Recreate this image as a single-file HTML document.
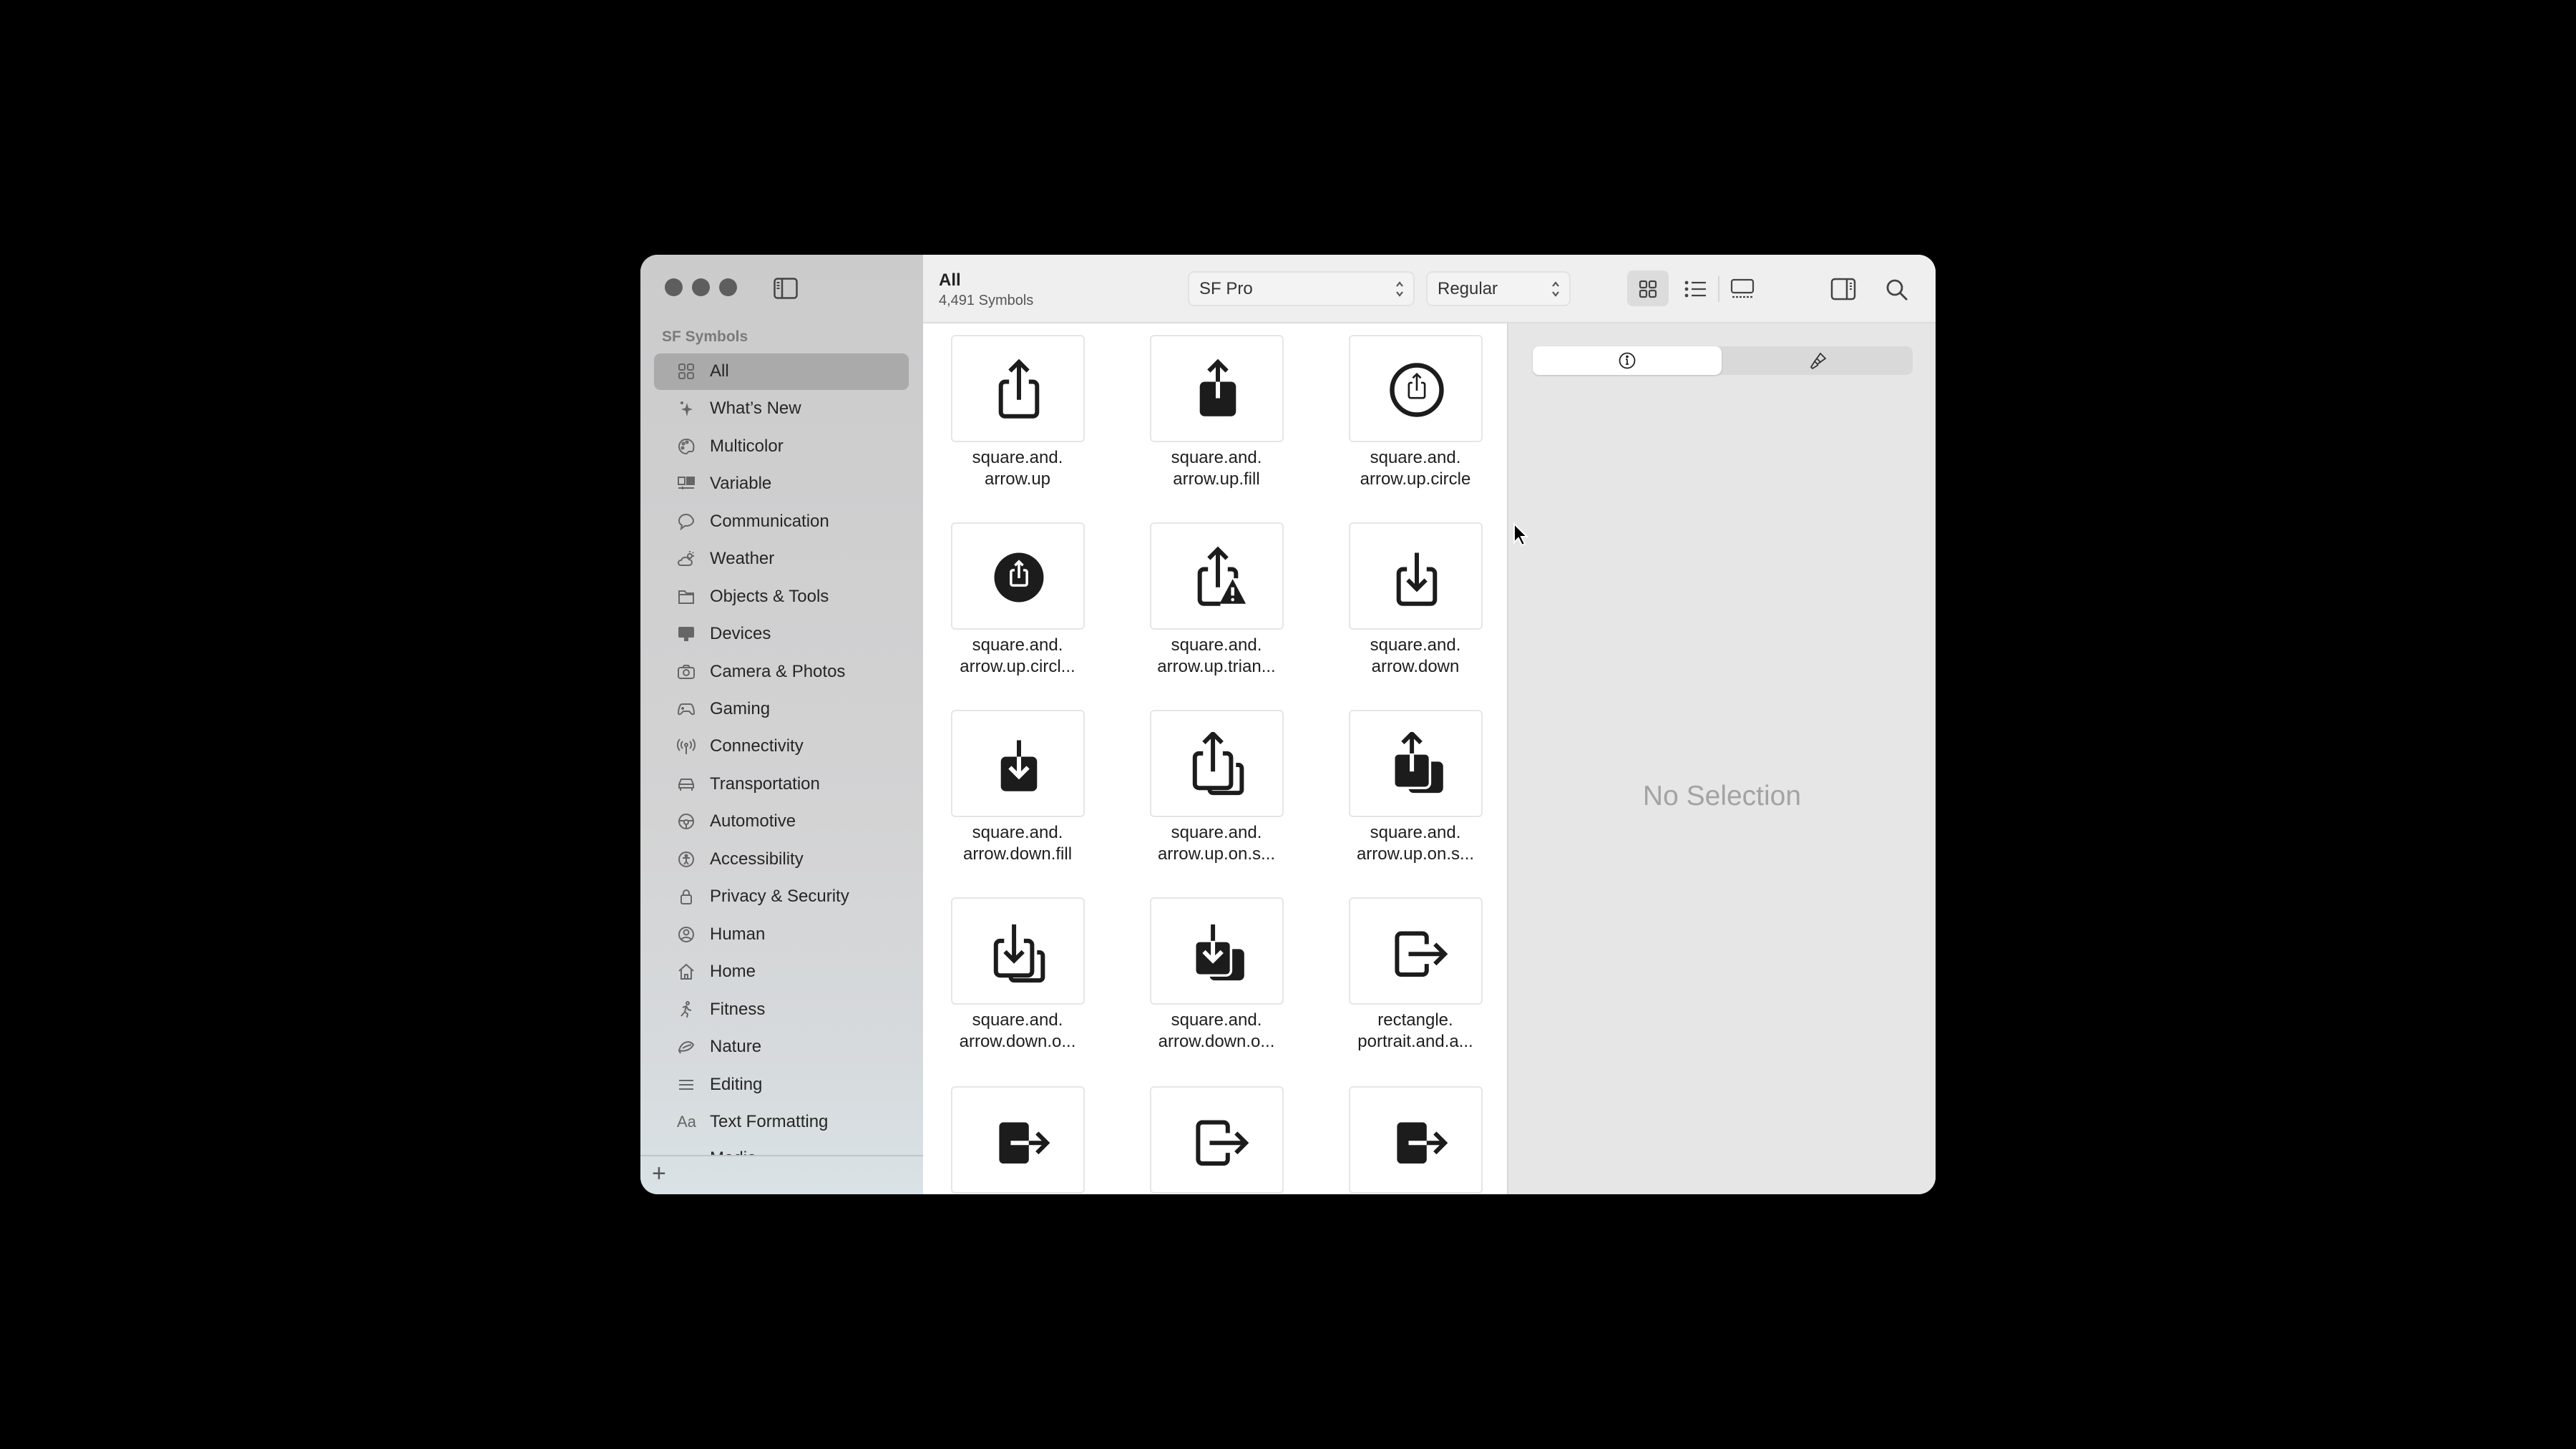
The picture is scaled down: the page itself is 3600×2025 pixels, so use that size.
<!DOCTYPE html>
<html><head><meta charset="utf-8">
<style>
*{margin:0;padding:0;box-sizing:border-box}
body{width:3600px;height:2025px;background:#000;position:relative;overflow:hidden;font-family:"Liberation Sans",sans-serif}
.win{position:absolute;left:895px;top:356px;width:1810px;height:1313px;border-radius:24px;overflow:hidden;background:#fff}
.side{position:absolute;left:0;top:0;width:395px;height:1313px;background:linear-gradient(180deg,#cbcbcc 0%,#d3d3d4 60%,#d6dadc 85%,#d9e2e6 100%)}
.dot{position:absolute;top:390px;width:25px;height:25px;border-radius:50%;background:#5e5e5e}
.abs{position:absolute}
.sitem{position:absolute;left:0;width:395px;height:50px;font-size:24px;color:#262626;line-height:50px}
.sitem span{position:absolute;left:97px}
.sitem svg{position:absolute;left:51px;top:12px}
.sel{position:absolute;left:19px;top:138px;width:356px;height:51px;border-radius:9px;background:#aaaaab}
.tb{position:absolute;left:395px;top:0;width:1415px;height:96px;background:#efeff0;border-bottom:2px solid #dcdcdc}
.pop{position:absolute;top:23px;height:49px;border:2px solid #e2e2e3;border-radius:9px;background:#f3f3f4;font-size:24px;color:#333;line-height:45px;padding-left:14px}
.grid{position:absolute;left:395px;top:96px;width:818px;height:1217px;background:#fff;border-right:2px solid #d8d8d8}
.insp{position:absolute;left:1213px;top:96px;width:597px;height:1217px;background:#e6e6e6}
.tile{position:absolute;width:187px;height:150px;border:2px solid #e6e6e6;border-radius:6px;background:#fff}
.tile svg{position:absolute;left:47px;top:29px}
.lbl{position:absolute;width:260px;text-align:center;font-size:24px;color:#1e1e1e;line-height:30px}
</style></head><body>
<div class="win">
 <div class="side">
  <div class="dot" style="left:34px;top:33px"></div>
  <div class="dot" style="left:72px;top:33px"></div>
  <div class="dot" style="left:110px;top:33px"></div>
  <svg class="abs" style="left:186px;top:32px" width="34" height="30" viewBox="0 0 34 30"><rect x="1.5" y="1.5" width="31" height="27" rx="4" fill="none" stroke="#444" stroke-width="2.5"/><line x1="12" y1="2" x2="12" y2="28" stroke="#444" stroke-width="2.5"/><path d="M4.5 7h4M4.5 11h4M4.5 15h4" stroke="#444" stroke-width="2"/></svg>
  <div class="abs" style="left:30px;top:103px;font-size:21px;font-weight:bold;color:#7a7a7a">SF Symbols</div>
  <div class="sel"></div>
  <div class="sitem" style="top:138px"><svg width="26" height="26" viewBox="0 0 26 26" fill="none" stroke="#666" stroke-width="2"><rect x="3" y="3" width="8" height="8" rx="2"/><rect x="15" y="3" width="8" height="8" rx="2"/><rect x="3" y="15" width="8" height="8" rx="2"/><rect x="15" y="15" width="8" height="8" rx="2"/></svg><span>All</span></div>
  <div class="sitem" style="top:190px"><svg width="26" height="26" viewBox="0 0 26 26" fill="#666"><path d="M14 5 L16 12 L22 14 L16 16 L14 24 L12 16 L6 14 L12 12Z"/><circle cx="7" cy="5" r="2"/></svg><span>What’s New</span></div>
  <div class="sitem" style="top:243px"><svg width="26" height="26" viewBox="0 0 26 26" fill="none" stroke="#666" stroke-width="2"><path d="M13 3a10 10 0 1 0 0 20c2 0 2-3 4-3h3a3 3 0 0 0 3-4A10 10 0 0 0 13 3z"/><circle cx="9" cy="9" r="1.5"/><circle cx="14" cy="7" r="1.5"/><circle cx="8" cy="15" r="1.5"/></svg><span>Multicolor</span></div>
  <div class="sitem" style="top:295px"><svg width="26" height="26" viewBox="0 0 26 26" fill="none" stroke="#666" stroke-width="2"><rect x="2" y="4" width="9" height="10"/><rect x="14" y="4" width="10" height="10" fill="#666"/><path d="M2 19h22M8 17v4"/></svg><span>Variable</span></div>
  <div class="sitem" style="top:348px"><svg width="26" height="26" viewBox="0 0 26 26" fill="none" stroke="#666" stroke-width="2"><path d="M13 3C7 3 3 7 3 12c0 3 2 5 4 6l-1 5 5-4h2c6 0 10-4 10-7S19 3 13 3z"/></svg><span>Communication</span></div>
  <div class="sitem" style="top:400px"><svg width="26" height="26" viewBox="0 0 26 26" fill="none" stroke="#666" stroke-width="2"><path d="M5 22h12a4 4 0 0 0 0-8 6 6 0 0 0-11 1 3.5 3.5 0 0 0-1 7z"/><circle cx="18" cy="9" r="3"/><path d="M18 2v2M24 9h-2M23 4l-1 1"/></svg><span>Weather</span></div>
  <div class="sitem" style="top:453px"><svg width="26" height="26" viewBox="0 0 26 26" fill="none" stroke="#666" stroke-width="2"><path d="M3 5h8l2 3h10v14H3z"/><path d="M3 10h20"/></svg><span>Objects &amp; Tools</span></div>
  <div class="sitem" style="top:505px"><svg width="26" height="26" viewBox="0 0 26 26" fill="#666"><rect x="2" y="3" width="22" height="15" rx="2"/><rect x="10" y="18" width="6" height="5"/></svg><span>Devices</span></div>
  <div class="sitem" style="top:558px"><svg width="26" height="26" viewBox="0 0 26 26" fill="none" stroke="#666" stroke-width="2"><rect x="2" y="7" width="22" height="15" rx="3"/><path d="M8 7l2-3h6l2 3"/><circle cx="13" cy="14" r="4"/></svg><span>Camera &amp; Photos</span></div>
  <div class="sitem" style="top:610px"><svg width="26" height="26" viewBox="0 0 26 26" fill="none" stroke="#666" stroke-width="2"><path d="M7 6h12c3 0 5 8 5 12 0 3-3 3-5 0l-2-2H9l-2 2c-2 3-5 3-5 0 0-4 2-12 5-12z"/><path d="M8 10v4M6 12h4"/></svg><span>Gaming</span></div>
  <div class="sitem" style="top:662px"><svg width="26" height="26" viewBox="0 0 26 26" fill="none" stroke="#666" stroke-width="2"><circle cx="13" cy="11" r="2"/><path d="M13 13v11M8 6a7 7 0 0 0 0 10M18 6a7 7 0 0 1 0 10M4 3a12 12 0 0 0 0 16M22 3a12 12 0 0 1 0 16"/></svg><span>Connectivity</span></div>
  <div class="sitem" style="top:715px"><svg width="26" height="26" viewBox="0 0 26 26" fill="none" stroke="#666" stroke-width="2"><path d="M3 18v-5l3-7h14l3 7v5z"/><path d="M5 18v4M21 18v4M3 13h20"/></svg><span>Transportation</span></div>
  <div class="sitem" style="top:767px"><svg width="26" height="26" viewBox="0 0 26 26" fill="none" stroke="#666" stroke-width="2"><circle cx="13" cy="13" r="10"/><circle cx="13" cy="14" r="3"/><path d="M3 12h7M16 12h7M13 17v6"/></svg><span>Automotive</span></div>
  <div class="sitem" style="top:820px"><svg width="26" height="26" viewBox="0 0 26 26" fill="none" stroke="#666" stroke-width="2"><circle cx="13" cy="13" r="10"/><circle cx="13" cy="8" r="1.5" fill="#666"/><path d="M8 11h10M13 11v5l-3 4M13 16l3 4"/></svg><span>Accessibility</span></div>
  <div class="sitem" style="top:872px"><svg width="26" height="26" viewBox="0 0 26 26" fill="none" stroke="#666" stroke-width="2"><rect x="6" y="11" width="14" height="12" rx="2"/><path d="M9 11V8a4 4 0 0 1 8 0v3"/></svg><span>Privacy &amp; Security</span></div>
  <div class="sitem" style="top:925px"><svg width="26" height="26" viewBox="0 0 26 26" fill="none" stroke="#666" stroke-width="2"><circle cx="13" cy="13" r="10"/><circle cx="13" cy="10" r="3.5"/><path d="M6 20c3-4 11-4 14 0"/></svg><span>Human</span></div>
  <div class="sitem" style="top:977px"><svg width="26" height="26" viewBox="0 0 26 26" fill="none" stroke="#666" stroke-width="2"><path d="M3 12L13 3l10 9M6 10v13h14V10"/><path d="M11 23v-6h4v6"/></svg><span>Home</span></div>
  <div class="sitem" style="top:1030px"><svg width="26" height="26" viewBox="0 0 26 26" fill="none" stroke="#666" stroke-width="2"><circle cx="15" cy="4" r="2"/><path d="M8 10l5-2 3 5 4 1M13 8l-2 8 4 3-1 5M11 16l-5 6"/></svg><span>Fitness</span></div>
  <div class="sitem" style="top:1082px"><svg width="26" height="26" viewBox="0 0 26 26" fill="none" stroke="#666" stroke-width="2"><path d="M3 18c4-14 16-14 20-8-4 8-14 10-20 8zM3 18l2 4M8 15c4-3 8-4 12-5"/></svg><span>Nature</span></div>
  <div class="sitem" style="top:1135px"><svg width="26" height="26" viewBox="0 0 26 26" fill="none" stroke="#666" stroke-width="2"><path d="M3 7h20M3 13h20M3 19h20"/></svg><span>Editing</span></div>
  <div class="sitem" style="top:1187px"><span style="left:51px;font-size:22px;color:#666">Aa</span><span>Text Formatting</span></div>
  <div class="abs" style="left:0;top:1240px;width:395px;height:18px;overflow:hidden;font-size:24px;color:#262626"><span class="abs" style="left:97px;top:11px;line-height:24px">Media</span><span class="abs" style="left:51px;top:11px;line-height:24px;color:#666">▭</span></div>
  <div class="abs" style="left:0;top:1258px;width:395px;height:2px;background:#c4c4c4"></div>
  <div class="abs" style="left:16px;top:1264px;font-size:34px;color:#555;line-height:40px">+</div>
 </div>
 <div class="tb">
  <div class="abs" style="left:22px;top:22px;font-size:24px;font-weight:bold;color:#222">All</div>
  <div class="abs" style="left:22px;top:53px;font-size:20px;color:#555">4,491 Symbols</div>
  <div class="pop" style="left:370px;width:317px">SF Pro<svg class="abs" style="right:12px;top:10px" width="14" height="26" viewBox="0 0 14 26" fill="none" stroke="#555" stroke-width="2.2"><path d="M3 9l4-5 4 5M3 17l4 5 4-5"/></svg></div>
  <div class="pop" style="left:703px;width:202px">Regular<svg class="abs" style="right:12px;top:10px" width="14" height="26" viewBox="0 0 14 26" fill="none" stroke="#555" stroke-width="2.2"><path d="M3 9l4-5 4 5M3 17l4 5 4-5"/></svg></div>
  <div class="abs" style="left:984px;top:22px;width:58px;height:50px;border-radius:8px;background:#dcdcdd"></div>
  <svg class="abs" style="left:1000px;top:35px" width="26" height="26" viewBox="0 0 26 26" fill="none" stroke="#444" stroke-width="2.2"><rect x="2" y="2" width="9" height="9" rx="2"/><rect x="15" y="2" width="9" height="9" rx="2"/><rect x="2" y="15" width="9" height="9" rx="2"/><rect x="15" y="15" width="9" height="9" rx="2"/></svg>
  <svg class="abs" style="left:1064px;top:35px" width="32" height="26" viewBox="0 0 32 26" fill="none" stroke="#444" stroke-width="2.2"><path d="M10 4h20M10 13h20M10 22h20"/><circle cx="3" cy="4" r="1.3" fill="#444"/><circle cx="3" cy="13" r="1.3" fill="#444"/><circle cx="3" cy="22" r="1.3" fill="#444"/></svg>
  <div class="abs" style="left:1111px;top:30px;width:2px;height:36px;background:#d6d6d6"></div>
  <svg class="abs" style="left:1128px;top:33px" width="34" height="30" viewBox="0 0 34 30" fill="none" stroke="#444" stroke-width="2.2"><rect x="2" y="2" width="30" height="18" rx="3"/><path d="M3 26h28" stroke-dasharray="3 2"/></svg>
  <svg class="abs" style="left:1268px;top:32px" width="36" height="32" viewBox="0 0 36 32" fill="none" stroke="#444" stroke-width="2.5"><rect x="2" y="2" width="32" height="28" rx="4"/><line x1="23" y1="2" x2="23" y2="30"/><path d="M27 8h3M27 12h3M27 16h3" stroke-width="2"/></svg>
  <svg class="abs" style="left:1344px;top:32px" width="34" height="34" viewBox="0 0 34 34" fill="none" stroke="#444" stroke-width="2.8"><circle cx="14" cy="14" r="10"/><path d="M21.5 21.5L31 31"/></svg>
 </div>
 <div class="grid"></div>
 <div class="insp">
  <div class="abs" style="left:34px;top:32px;width:531px;height:40px;border-radius:9px;background:#d9d9d9"></div>
  <div class="abs" style="left:34px;top:32px;width:264px;height:40px;border-radius:9px;background:#fff;box-shadow:0 1px 2px rgba(0,0,0,.2)"></div>
  <svg class="abs" style="left:153px;top:39px" width="26" height="26" viewBox="0 0 26 26" fill="none" stroke="#222" stroke-width="1.8"><circle cx="13" cy="13" r="10.5"/><path d="M13 11v7M11 18h4M11 11h2"/><circle cx="13" cy="7.5" r="1" fill="#222"/></svg>
  <svg class="abs" style="left:420px;top:39px" width="26" height="26" viewBox="0 0 26 26" fill="none" stroke="#333" stroke-width="1.8"><path d="M16 3l7 7-7 5-5-5zM11 10l5 5-4 3-4-4zM8 14l-5 8 2 2 8-5"/></svg>
  <div class="abs" style="left:0;top:639px;width:597px;text-align:center;font-size:39px;color:#a3a3a3">No Selection</div>
 </div>
</div>
<svg class="abs" style="left:2114px;top:730px" width="22" height="34" viewBox="0 0 22 34"><path d="M2 2v26l6-6 5 10 4-2-5-10h8z" fill="#000" stroke="#fff" stroke-width="2"/></svg>

<svg width="0" height="0" style="position:absolute">
<defs>
 <g id="up"><path d="M14 15h-2.5a2.5 2.5 0 0 0-2.5 2.5v16a2.5 2.5 0 0 0 2.5 2.5h17a2.5 2.5 0 0 0 2.5-2.5v-16a2.5 2.5 0 0 0-2.5-2.5H26" fill="none" stroke="#1c1c1c" stroke-width="2.6"/><path d="M20 26V3M14.5 8.5L20 3l5.5 5.5" fill="none" stroke="#1c1c1c" stroke-width="2.6"/></g>
 <g id="down"><path d="M14 15h-2.5a2.5 2.5 0 0 0-2.5 2.5v16a2.5 2.5 0 0 0 2.5 2.5h17a2.5 2.5 0 0 0 2.5-2.5v-16a2.5 2.5 0 0 0-2.5-2.5H26" fill="none" stroke="#1c1c1c" stroke-width="2.6"/><path d="M20 5v22M14.5 21.5L20 27l5.5-5.5" fill="none" stroke="#1c1c1c" stroke-width="2.6"/></g>
</defs></svg>

<!-- Row 1 -->
<div class="tile" style="left:1329px;top:468px"><svg width="92" height="92" viewBox="0 0 40 40"><use href="#up"/></svg></div>
<div class="tile" style="left:1607px;top:468px"><svg width="92" height="92" viewBox="0 0 40 40"><rect x="9" y="15" width="22" height="21" rx="3" fill="#1c1c1c"/><path d="M20 25V3M14.5 8.5L20 3l5.5 5.5" fill="none" stroke="#1c1c1c" stroke-width="2.6"/><path d="M20 15v10" stroke="#fff" stroke-width="2.6"/></svg></div>
<div class="tile" style="left:1885px;top:468px"><svg width="92" height="92" viewBox="0 0 40 40"><circle cx="20" cy="20" r="15" fill="none" stroke="#1c1c1c" stroke-width="2.8"/><g transform="translate(11.2 9) scale(0.44)"><use href="#up"/></g></svg></div>
<div class="lbl" style="left:1292px;top:625px">square.and.<br>arrow.up</div>
<div class="lbl" style="left:1570px;top:625px">square.and.<br>arrow.up.fill</div>
<div class="lbl" style="left:1848px;top:625px">square.and.<br>arrow.up.circle</div>
<!-- Row 2 -->
<div class="tile" style="left:1329px;top:730px"><svg width="92" height="92" viewBox="0 0 40 40"><circle cx="20" cy="20" r="15" fill="#1c1c1c"/><g transform="translate(11.2 9) scale(0.44)"><path d="M14 15h-2.5a2.5 2.5 0 0 0-2.5 2.5v16a2.5 2.5 0 0 0 2.5 2.5h17a2.5 2.5 0 0 0 2.5-2.5v-16a2.5 2.5 0 0 0-2.5-2.5H26" fill="none" stroke="#fff" stroke-width="3.5"/><path d="M20 26V3M14.5 8.5L20 3l5.5 5.5" fill="none" stroke="#fff" stroke-width="3.5"/></g></svg></div>
<div class="tile" style="left:1607px;top:730px"><svg width="92" height="92" viewBox="0 0 40 40"><path d="M14 15h-2.5a2.5 2.5 0 0 0-2.5 2.5v16a2.5 2.5 0 0 0 2.5 2.5h10M26 15h2.5a2.5 2.5 0 0 1 2.5 2.5v3" fill="none" stroke="#1c1c1c" stroke-width="2.6"/><path d="M20 26V3M14.5 8.5L20 3l5.5 5.5" fill="none" stroke="#1c1c1c" stroke-width="2.6"/><path d="M29 21l8 15H21z" fill="#1c1c1c"/><path d="M29 26v5" stroke="#fff" stroke-width="2"/><circle cx="29" cy="33.5" r="1" fill="#fff"/></svg></div>
<div class="tile" style="left:1885px;top:730px"><svg width="92" height="92" viewBox="0 0 40 40"><use href="#down"/></svg></div>
<div class="lbl" style="left:1292px;top:887px">square.and.<br>arrow.up.circl...</div>
<div class="lbl" style="left:1570px;top:887px">square.and.<br>arrow.up.trian...</div>
<div class="lbl" style="left:1848px;top:887px">square.and.<br>arrow.down</div>
<!-- Row 3 -->
<div class="tile" style="left:1329px;top:992px"><svg width="92" height="92" viewBox="0 0 40 40"><rect x="9" y="15" width="22" height="21" rx="3" fill="#1c1c1c"/><path d="M20 5v22M14.5 21.5L20 27l5.5-5.5" fill="none" stroke="#1c1c1c" stroke-width="2.6"/><path d="M20 15v12M14.5 21.5L20 27l5.5-5.5" fill="none" stroke="#fff" stroke-width="2.6"/></svg></div>
<div class="tile" style="left:1607px;top:992px"><svg width="92" height="92" viewBox="0 0 40 40"><path d="M31 20h1.5a2 2 0 0 1 2 2v13a2 2 0 0 1-2 2H17a2 2 0 0 1-2-2v-1" fill="none" stroke="#1c1c1c" stroke-width="2.6"/><g transform="translate(-3 -2)"><use href="#up"/></g></svg></div>
<div class="tile" style="left:1885px;top:992px"><svg width="92" height="92" viewBox="0 0 40 40"><rect x="15" y="18" width="21" height="19" rx="3" fill="#1c1c1c"/><rect x="6" y="13" width="22" height="21" rx="3" fill="#1c1c1c" stroke="#fff" stroke-width="1.5"/><path d="M17 24V1M11.5 6.5L17 1l5.5 5.5" fill="none" stroke="#1c1c1c" stroke-width="2.6"/><path d="M17 13v11" stroke="#fff" stroke-width="2.6"/></svg></div>
<div class="lbl" style="left:1292px;top:1149px">square.and.<br>arrow.down.fill</div>
<div class="lbl" style="left:1570px;top:1149px">square.and.<br>arrow.up.on.s...</div>
<div class="lbl" style="left:1848px;top:1149px">square.and.<br>arrow.up.on.s...</div>
<!-- Row 4 -->
<div class="tile" style="left:1329px;top:1254px"><svg width="92" height="92" viewBox="0 0 40 40"><path d="M31 20h1.5a2 2 0 0 1 2 2v13a2 2 0 0 1-2 2H17a2 2 0 0 1-2-2v-1" fill="none" stroke="#1c1c1c" stroke-width="2.6"/><g transform="translate(-3 -2)"><use href="#down"/></g></svg></div>
<div class="tile" style="left:1607px;top:1254px"><svg width="92" height="92" viewBox="0 0 40 40"><rect x="15" y="18" width="21" height="19" rx="3" fill="#1c1c1c"/><rect x="6" y="13" width="22" height="21" rx="3" fill="#1c1c1c" stroke="#fff" stroke-width="1.5"/><path d="M17 3v11" stroke="#1c1c1c" stroke-width="2.6"/><path d="M17 13v12M11.5 19.5L17 25l5.5-5.5" fill="none" stroke="#fff" stroke-width="2.6"/></svg></div>
<div class="tile" style="left:1885px;top:1254px"><svg width="92" height="92" viewBox="0 0 40 40"><path d="M26 15v-4a2.5 2.5 0 0 0-2.5-2.5H10.5A2.5 2.5 0 0 0 8 11v20a2.5 2.5 0 0 0 2.5 2.5h13A2.5 2.5 0 0 0 26 31v-4" fill="none" stroke="#1c1c1c" stroke-width="2.6"/><path d="M15 21h22M31 15l6 6-6 6" fill="none" stroke="#1c1c1c" stroke-width="2.6"/></svg></div>
<div class="lbl" style="left:1292px;top:1411px">square.and.<br>arrow.down.o...</div>
<div class="lbl" style="left:1570px;top:1411px">square.and.<br>arrow.down.o...</div>
<div class="lbl" style="left:1848px;top:1411px">rectangle.<br>portrait.and.a...</div>
<!-- Row 5 (clipped) -->
<div style="position:absolute;left:1290px;top:1500px;width:818px;height:169px;overflow:hidden">
<div class="tile" style="left:39px;top:18px"><svg width="92" height="92" viewBox="0 0 40 40"><rect x="8" y="8.5" width="18" height="25" rx="2.5" fill="#1c1c1c"/><path d="M15 21h22M31 15l6 6-6 6" fill="none" stroke="#1c1c1c" stroke-width="2.6"/><path d="M15 21h11" stroke="#fff" stroke-width="2.6"/></svg></div>
<div class="tile" style="left:317px;top:18px"><svg width="92" height="92" viewBox="0 0 40 40"><path d="M26 15v-4a2.5 2.5 0 0 0-2.5-2.5H10.5A2.5 2.5 0 0 0 8 11v20a2.5 2.5 0 0 0 2.5 2.5h13A2.5 2.5 0 0 0 26 31v-4" fill="none" stroke="#1c1c1c" stroke-width="2.6"/><path d="M15 21h22M31 15l6 6-6 6" fill="none" stroke="#1c1c1c" stroke-width="2.6"/></svg></div>
<div class="tile" style="left:595px;top:18px"><svg width="92" height="92" viewBox="0 0 40 40"><rect x="8" y="8.5" width="18" height="25" rx="2.5" fill="#1c1c1c"/><path d="M15 21h22M31 15l6 6-6 6" fill="none" stroke="#1c1c1c" stroke-width="2.6"/><path d="M15 21h11" stroke="#fff" stroke-width="2.6"/></svg></div>
</div>
</body></html>
